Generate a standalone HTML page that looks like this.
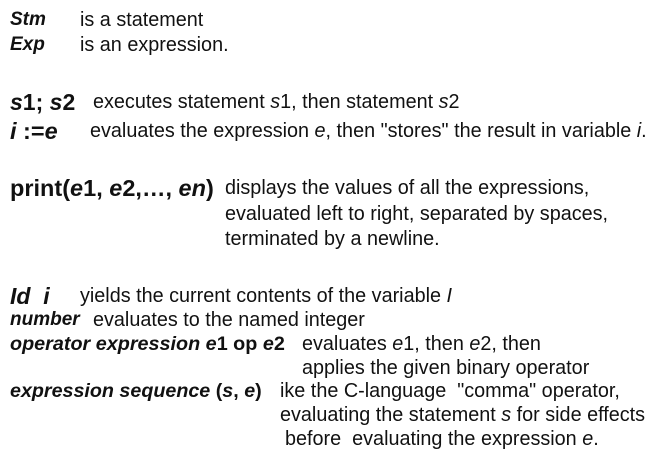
<!DOCTYPE html>
<html><head><meta charset="utf-8"><style>
html,body{margin:0;padding:0;background:#fff;}
body{width:658px;height:461px;position:relative;overflow:hidden;font-family:"Liberation Sans",Arial,sans-serif;color:#111;}
.l{position:absolute;white-space:nowrap;font-size:20px;line-height:22px;transform:scaleX(0.99);transform-origin:left center;}
.b{font-weight:bold;transform:none;}
</style></head><body>
<div class="l b" style="left:10px;top:9px;font-size:19px"><i>Stm</i></div>
<div class="l" style="left:80px;top:9px">is a statement</div>
<div class="l b" style="left:10px;top:34px;font-size:19px"><i>Exp</i></div>
<div class="l" style="left:80px;top:34px">is an expression.</div>

<div class="l b" style="left:10px;top:91px;font-size:23px"><i>s</i>1; <i>s</i>2</div>
<div class="l" style="left:93px;top:91px">executes statement <i>s</i>1, then statement <i>s</i>2</div>
<div class="l b" style="left:10px;top:120px;font-size:23.5px"><i>i</i> :=<i>e</i></div>
<div class="l" style="left:90px;top:120px">evaluates the expression <i>e</i>, then "stores" the result in variable <i>i</i>.</div>

<div class="l b" style="left:10px;top:177px;font-size:23.5px">print(<i>e</i>1, <i>e</i>2,…, <i>en</i>)</div>
<div class="l" style="left:225px;top:177px">displays the values of all the expressions,</div>
<div class="l" style="left:225px;top:203px">evaluated left to right, separated by spaces,</div>
<div class="l" style="left:225px;top:228px">terminated by a newline.</div>

<div class="l b" style="left:10px;top:285px;font-size:23px"><i>Id&nbsp; i</i></div>
<div class="l" style="left:80px;top:285px">yields the current contents of the variable <i>I</i></div>
<div class="l b" style="left:10px;top:309px;font-size:19px"><i>number</i></div>
<div class="l" style="left:93px;top:309px">evaluates to the named integer</div>
<div class="l b" style="left:10px;top:333px;font-size:19.8px"><i>operator expression e</i>1 op <i>e</i>2</div>
<div class="l" style="left:302px;top:333px">evaluates <i>e</i>1, then <i>e</i>2, then</div>
<div class="l" style="left:302px;top:357px">applies the given binary operator</div>
<div class="l b" style="left:10px;top:380px;font-size:19.7px"><i>expression sequence</i> (<i>s</i>, <i>e</i>)</div>
<div class="l" style="left:280px;top:380px">ike the C-language&nbsp; "comma" operator,</div>
<div class="l" style="left:280px;top:404px">evaluating the statement <i>s</i> for side effects</div>
<div class="l" style="left:285px;top:428px">before&nbsp; evaluating the expression <i>e</i>.</div>
</body></html>
